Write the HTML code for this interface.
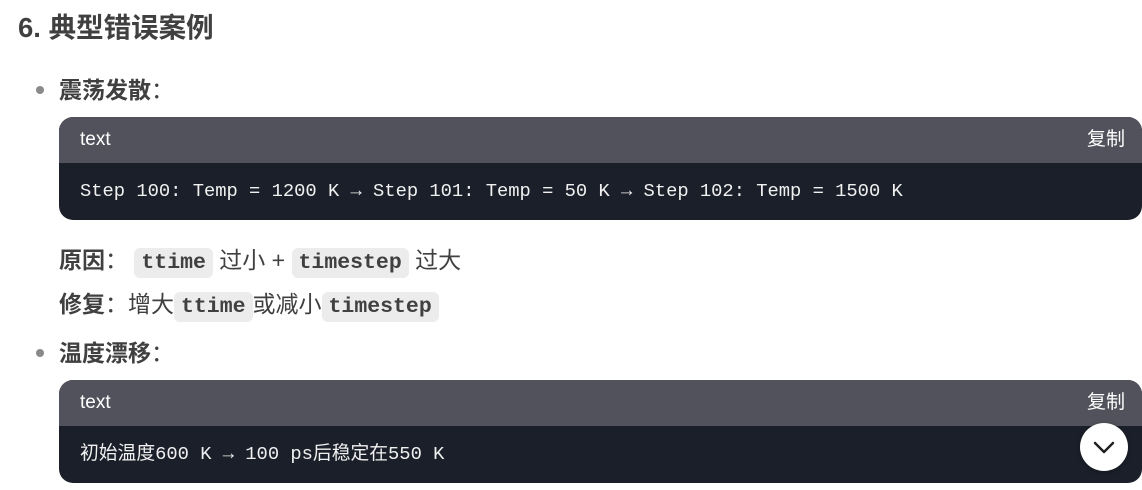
<!DOCTYPE html>
<html><head><meta charset="utf-8"><style>
body{margin:0;width:1142px;height:490px;background:#fff;font-family:"Liberation Sans","Noto Sans CJK SC",sans-serif;color:#404040;position:relative;overflow:hidden}
.a{position:absolute;white-space:nowrap}
h1{position:absolute;left:18px;top:10px;margin:0;font-size:27.5px;font-weight:bold;color:#404040;line-height:36px}
.dot{position:absolute;width:8px;height:8px;border-radius:50%;background:#8a8a8a}
.lbl{font-size:23px;font-weight:bold;line-height:30px}
.blk{position:absolute;left:59px;width:1083px;border-radius:14px;overflow:hidden;background:#1b1f29}
.hd{height:46px;background:#52525c;color:#fff;font-size:19px;line-height:46px;padding-left:21px;position:relative}
.hd span{position:absolute;right:17px;top:0}
.bd{height:57px;color:#f0f0f0;font-family:"Liberation Mono","Noto Sans CJK SC",monospace;font-size:18.8px;line-height:57px;padding-left:21px}
.ln{font-size:23px;line-height:38px}
code{background:#ececec;border-radius:6px;padding:3px 7px;font-family:"Liberation Mono",monospace;font-weight:bold;font-size:21.5px;color:#404040}
.btn{position:absolute;left:1080px;top:423px;width:48px;height:48px;border-radius:50%;background:#fff;box-shadow:0 1px 4px rgba(0,0,0,.3)}
</style></head><body>
<h1>6. 典型错误案例</h1>
<div class="dot" style="left:36px;top:86px"></div>
<div class="a lbl" style="left:59px;top:75px">震荡发散<span style="font-weight:normal">：</span></div>
<div class="blk" style="top:117px"><div class="hd">text<span>复制</span></div><div class="bd">Step 100: Temp = 1200 K → Step 101: Temp = 50 K → Step 102: Temp = 1500 K</div></div>
<div class="a ln" style="left:59px;top:241px"><b>原因</b>： <code>ttime</code> 过小 + <code>timestep</code> 过大</div>
<div class="a ln" style="left:59px;top:285px"><b>修复</b>：增大<code>ttime</code>或减小<code>timestep</code></div>
<div class="dot" style="left:36px;top:349px"></div>
<div class="a lbl" style="left:59px;top:338px">温度漂移<span style="font-weight:normal">：</span></div>
<div class="blk" style="top:380px"><div class="hd">text<span>复制</span></div><div class="bd">初始温度600 K → 100 ps后稳定在550 K</div></div>
<div class="btn"><svg width="48" height="48" viewBox="0 0 48 48"><path d="M15 20 L24 29 L33 20" fill="none" stroke="#222" stroke-width="2.5" stroke-linecap="round" stroke-linejoin="round"/></svg></div>
</body></html>
